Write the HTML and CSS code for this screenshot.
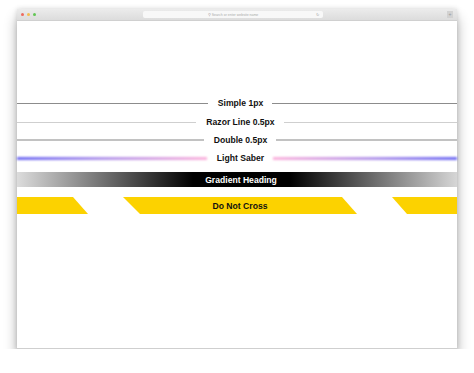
FILE: index.html
```html
<!DOCTYPE html>
<html lang="en">
<head>
    <meta charset="UTF-8">
    <meta name="viewport" content="width=device-width, initial-scale=1.0">
    <title>Heading Lines</title>
    <link rel="stylesheet" href="styles.css">
</head>
<body>
    <div class="window">
        <div class="toolbar">
            <div class="lights">
                <span class="light red"></span>
                <span class="light yellow"></span>
                <span class="light green"></span>
            </div>
            <div class="address">
                <span class="search">&#9906; Search or enter website name</span>
                <span class="reload">&#8635;</span>
            </div>
            <div class="tab-btn">+</div>
        </div>

        <div class="content">
            <div class="row simple">
                <span class="line left"></span>
                <h2>Simple 1px</h2>
                <span class="line right"></span>
            </div>
            <div class="row razor">
                <span class="line left"></span>
                <h2>Razor Line 0.5px</h2>
                <span class="line right"></span>
            </div>
            <div class="row double">
                <span class="line left"></span>
                <h2>Double 0.5px</h2>
                <span class="line right"></span>
            </div>
            <div class="row saber">
                <span class="line left"></span>
                <h2>Light Saber</h2>
                <span class="line right"></span>
            </div>
            <div class="gradient-heading">
                <h2>Gradient Heading</h2>
            </div>
            <div class="do-not-cross">
                <svg class="stripes" viewBox="0 0 440 17" preserveAspectRatio="none">
                    <polygon points="0,0 56,0 71,17 0,17" fill="#fcd200"/>
                    <polygon points="106,0 325,0 340,17 123,17" fill="#fcd200"/>
                    <polygon points="375,0 440,0 440,17 390,17" fill="#fcd200"/>
                </svg>
                <h2>Do Not Cross</h2>
            </div>
        </div>
    </div>
</body>
</html>
```

FILE: styles.css
```css
body {
    margin: 0;
    background: #fff;
    font-family: "Liberation Sans", Arial, sans-serif;
}
.window {
    margin: 9px 17px 0;
    width: 440px;
    height: 340px;
    background: #fff;
    box-shadow: 0 9px 12px rgba(0, 0, 0, 0.32), 0 0 5px rgba(0, 0, 0, 0.15);
    display: flex;
    flex-direction: column;
}
.toolbar {
    height: 12px;
    background: linear-gradient(#ececec, #dcdcdc);
    border-bottom: 1px solid #d0d0d0;
    display: flex;
    align-items: center;
    padding: 0 4px;
    box-sizing: border-box;
}
.lights {
    display: flex;
    gap: 3px;
    width: 122px;
}
.light {
    width: 3px;
    height: 3px;
    border-radius: 50%;
}
.red { background: #ee6a5f; }
.yellow { background: #f5be4f; }
.green { background: #62c654; }
.address {
    width: 180px;
    height: 7px;
    background: #f8f8f8;
    border-radius: 2px;
    display: flex;
    align-items: center;
    justify-content: center;
    position: relative;
}
.search {
    font-size: 3.5px;
    color: #aaa;
}
.reload {
    position: absolute;
    right: 4px;
    top: 0;
    font-size: 4px;
    line-height: 7px;
    color: #aaa;
}
.tab-btn {
    margin-left: auto;
    width: 6px;
    height: 7px;
    background: #d2d2d2;
    font-size: 5px;
    line-height: 7px;
    text-align: center;
    color: #999;
}
.content {
    flex: 1;
    padding-top: 73px;
    border-bottom: 1px solid #cfcfcf;
}
.row {
    display: flex;
    align-items: center;
    height: 18px;
}
.row h2, .gradient-heading h2, .do-not-cross h2 {
    margin: 0;
    font-size: 8.6px;
    font-weight: bold;
    color: #111;
}
.row h2 {
    margin: 0 9px 0 10px;
}
.row .line {
    flex: 1 1 0;
}
.row .line.left {
    flex-basis: 6px;
}
.simple .line {
    border-top: 1px solid #8c8c8c;
}
.razor {
    margin-top: 1px;
}
.razor .line {
    border-top: 1px solid #cfcfcf;
}
.double .line {
    border-top: 2px solid #c2c2c2;
}
.saber .line {
    height: 3px;
    filter: blur(0.9px);
}
.saber .left {
    background: linear-gradient(90deg, #6e6af2, #b195ea 45%, #fbb2dc);
}
.saber .right {
    background: linear-gradient(90deg, #fbb2dc, #b195ea 55%, #6e6af2);
}
.gradient-heading {
    margin-top: 5px;
    height: 15px;
    background: linear-gradient(90deg, #dcdcdc 0%, #000 40%, #000 62%, #d6d6d6 100%);
    display: flex;
    align-items: center;
    justify-content: center;
    padding-left: 8px;
}
.gradient-heading h2 {
    color: #fff;
}
.do-not-cross {
    margin-top: 10px;
    height: 17px;
    position: relative;
    display: flex;
    align-items: center;
    justify-content: center;
    padding-left: 6px;
}
.stripes {
    position: absolute;
    left: 0;
    top: 0;
    width: 100%;
    height: 100%;
}
.do-not-cross h2 {
    position: relative;
}
```
